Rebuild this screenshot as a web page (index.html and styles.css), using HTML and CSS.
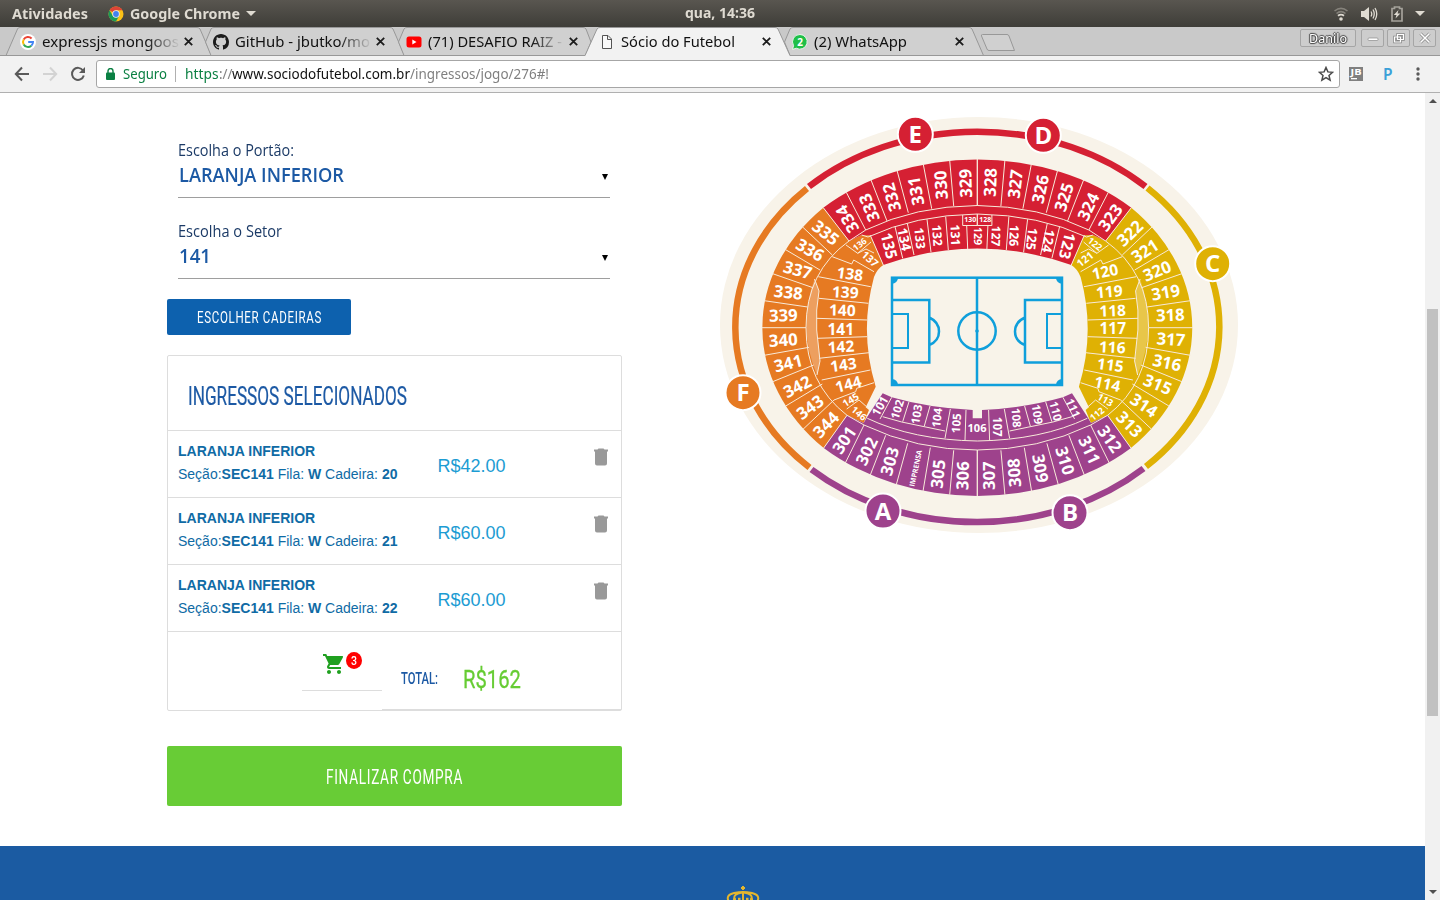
FILE: index.html
```html
<!DOCTYPE html>
<html lang="pt-BR">
<head>
<meta charset="utf-8">
<title>Sócio do Futebol</title>
<link rel="stylesheet" href="styles.css">
</head>
<body>
<div class="desktop">
  <header class="panel">
    <div class="panel-left">
      <span class="fit" data-w="76">Atividades</span>
      <svg class="chrome-logo" width="16" height="16" viewBox="0 0 16 16"><circle cx="8" cy="8" r="7.5" fill="#fbc116"/><path d="M8 8L1.5 4.25A7.5 7.5 0 0 1 14.5 4.25L8 4.3z" fill="#dc4437"/><path d="M1.5 4.25A7.5 7.5 0 0 0 8 15.5L11.2 9.8 8 8 4.8 9.8z" fill="#1b9a59"/><circle cx="8" cy="8" r="3.7" fill="#f1f1f1"/><circle cx="8" cy="8" r="2.9" fill="#4381ee"/></svg>
      <span class="fit" data-w="110">Google Chrome</span>
      <i class="caret"></i>
    </div>
    <span class="clock fit" data-w="70">qua, 14:36</span>
    <div class="panel-right">
      <svg width="14" height="14" viewBox="0 0 14 14" fill="none"><path d="M0.5 4Q7 -1.3 13.500 4M2.500 6.500Q7 2.600 11.500 6.500" stroke="#85827b" stroke-width="1.6"/><path d="M4 8.800Q7 6.500 10 8.800" stroke="#dfdbd2" stroke-width="1.800"/><circle cx="7" cy="12" r="1.800" fill="#dfdbd2"/></svg>
      <svg width="17" height="14" viewBox="0 0 17 14"><path d="M0 4h3l5-4v14l-5-4H0z" fill="#dfdbd2"/><path d="M10 4.500Q11.500 7 10 9.500M12 2.500Q14.500 7 12 11.500M14 1Q17.500 7 14 13" fill="none" stroke="#dfdbd2" stroke-width="1.300"/></svg>
      <svg width="12" height="16" viewBox="0 0 12 16"><path d="M1 2.500h2.500V1h5v1.500H11V15H1z" fill="none" stroke="#a5a29b" stroke-width="1.700"/><path d="M7.500 4L2.800 9h2.700l-1 3.500L9.300 7.500H6.500z" fill="#dfdbd2"/></svg>
      <i class="caret"></i>
    </div>
  </header>

  <nav class="tabstrip">
    <svg class="tab-shapes" width="1440" height="29" viewBox="0 27 1440 29">
      <g fill="#d0d0d0" stroke="#989898">
        <path d="M6 55.500L17.500 29Q18 27.500 20 27.500H197Q199 27.500 200 29L211.500 55.500"/>
        <path d="M205.500 42L211 29Q212 27.500 214 27.500H390Q392 27.500 393 29L404.500 55.500H211z"/>
        <path d="M398.500 42L404 29Q405 27.500 407 27.500H583Q585 27.500 586 29L591 42 585.500 55.500H404z"/>
        <path d="M784.500 42L790 29Q791 27.500 793 27.500H969Q971 27.500 972 29L983.500 55.500H790z"/>
        <path d="M982.500 34.500H1007Q1008.500 34.500 1009 36L1014.500 50.500H989Q987.500 50.500 987 49L981.500 36Q981 34.500 982.500 34.500z"/>
      </g>
      <path d="M0 55.500H1440" stroke="#989898"/>
      <path d="M585 56L597 29Q598 27.500 600 27.500H775Q777 27.500 778 29L790 56z" fill="#f2f2f2"/>
      <path d="M585 55.500L597 29Q598 27.500 600 27.500H775Q777 27.500 778 29L790 55.500" fill="none" stroke="#989898"/>
    </svg>
    <div class="tab">
      <svg width="16" height="16" viewBox="0 0 16 16" fill="none" stroke-width="2"><circle cx="8" cy="8" r="8" fill="#fff"/><path d="M11.600 4.500A5 5 0 0 0 3.700 5.500" stroke="#ea4335"/><path d="M3.700 5.500A5 5 0 0 0 3.700 10.500" stroke="#fbbc05"/><path d="M3.700 10.500A5 5 0 0 0 11.300 11.700" stroke="#34a853"/><path d="M11.300 11.700A5 5 0 0 0 13 8H8.200" stroke="#4285f4"/></svg>
      <span class="tab-title fade"><span class="fit" data-w="137">expressjs mongoos</span></span>
      <svg class="x" width="9" height="9" viewBox="0 0 9 9"><path d="M.8.8l7.400 7.400M8.200.8L.8 8.200"/></svg>
    </div>
    <div class="tab">
      <svg width="16" height="16" viewBox="0 0 16 16"><path fill="#1b1b1b" d="M8 0C3.580 0 0 3.580 0 8c0 3.540 2.290 6.530 5.470 7.590.4.070.550-.170.550-.380 0-.190-.010-.820-.010-1.490-2.010.370-2.530-.490-2.690-.940-.090-.230-.480-.940-.820-1.130-.280-.150-.680-.520-.010-.530.630-.010 1.080.580 1.230.820.720 1.210 1.870.870 2.330.660.070-.520.280-.870.510-1.070-1.780-.200-3.640-.890-3.640-3.950 0-.870.310-1.590.820-2.150-.080-.200-.360-1.020.080-2.120 0 0 .670-.210 2.200.820.640-.180 1.320-.270 2-.270s1.360.090 2 .270c1.530-1.040 2.200-.820 2.200-.820.440 1.100.160 1.920.080 2.120.510.560.820 1.270.820 2.150 0 3.070-1.870 3.750-3.650 3.950.290.250.540.730.540 1.480 0 1.070-.010 1.930-.010 2.200 0 .210.150.460.550.380A8 8 0 0 0 16 8c0-4.420-3.580-8-8-8z"/></svg>
      <span class="tab-title fade"><span class="fit" data-w="135">GitHub - jbutko/mo</span></span>
      <svg class="x" width="9" height="9" viewBox="0 0 9 9"><path d="M.8.8l7.400 7.400M8.200.8L.8 8.200"/></svg>
    </div>
    <div class="tab">
      <svg width="16" height="16" viewBox="0 0 16 16"><rect x=".500" y="2.500" width="15" height="11" rx="2.500" fill="#f00"/><path d="M6.300 5.600v5l4.200-2.500z" fill="#fff"/></svg>
      <span class="tab-title fade"><span class="fit" data-w="134">(71) DESAFIO RAIZ -</span></span>
      <svg class="x" width="9" height="9" viewBox="0 0 9 9"><path d="M.8.8l7.400 7.400M8.200.8L.8 8.200"/></svg>
    </div>
    <div class="tab active">
      <svg width="16" height="16" viewBox="0 0 16 16"><path d="M3.500 1.500h5.500l3.500 3.500v9.500h-9zM8.500 1.500v4h4" fill="#fafafa" stroke="#555"/></svg>
      <span class="tab-title"><span class="fit" data-w="114">Sócio do Futebol</span></span>
      <svg class="x" width="9" height="9" viewBox="0 0 9 9"><path d="M.8.8l7.400 7.400M8.200.8L.8 8.200"/></svg>
    </div>
    <div class="tab">
      <svg width="16" height="16" viewBox="0 0 16 16"><path d="M8 .5a7.300 7.300 0 1 1-3.700 13.700L.6 15.300l1-3.700A7.300 7.300 0 0 1 8 .5z" fill="#1fbf48" stroke="#fff" stroke-width=".8"/><text x="8" y="12" text-anchor="middle" class="wa">2</text></svg>
      <span class="tab-title"><span class="fit" data-w="93">(2) WhatsApp</span></span>
      <svg class="x" width="9" height="9" viewBox="0 0 9 9"><path d="M.8.8l7.400 7.400M8.200.8L.8 8.200"/></svg>
    </div>
    <div class="win-controls">
      <div class="win user"><span class="fit" data-w="38">Danilo</span></div>
      <div class="win"><svg width="12" height="12" viewBox="0 0 12 12"><rect x="1" y="6" width="10" height="2.500" rx="1" fill="#fff" stroke="#8a8a8a" stroke-width=".7"/></svg></div>
      <div class="win"><svg width="12" height="12" viewBox="0 0 12 12" fill="none"><path d="M4.500 2.500h6v5h-6zM1.500 5h6v5h-6z" stroke="#888" stroke-width="2.600"/><path d="M4.500 2.500h6v5h-6zM1.500 5h6v5h-6z" stroke="#fff" stroke-width="1.200"/></svg></div>
      <div class="win"><svg width="12" height="12" viewBox="0 0 12 12"><path d="M1.500 1.500l9 9M10.500 1.500l-9 9" stroke="#888" stroke-width="3"/><path d="M1.500 1.500l9 9M10.500 1.500l-9 9" stroke="#fff" stroke-width="1.500"/></svg></div>
    </div>
  </nav>

  <div class="toolbar">
    <svg class="nav-icons" width="74" height="18" viewBox="14 65 74 18" fill="none" stroke-width="2"><path d="M29 74H16M22 67.500L15.800 74 22 80.500" stroke="#5a5a5a"/><path d="M43 74H56M50 67.500L56.200 74 50 80.500" stroke="#d3d3d3"/><path d="M83 70.500A6 6 0 1 0 83.800 75.500" stroke="#5a5a5a"/><path d="M85 67v6h-6z" fill="#5a5a5a"/></svg>
    <div class="omnibox">
      <svg width="9" height="12" viewBox="0 0 9 12"><rect y="4.500" width="9" height="7.500" rx="1" fill="#0b8043"/><path d="M2 5V3a2.500 2.500 0 0 1 5 0v2" fill="none" stroke="#0b8043" stroke-width="1.400"/></svg>
      <span class="fit secure" data-w="44">Seguro</span>
      <i class="sep"></i>
      <span class="url"><span class="fit scheme" data-w="33.500">https</span><span class="fit dim" data-w="13.500">://</span><span class="fit" data-w="178">www.sociodofutebol.com.br</span><span class="fit dim" data-w="139">/ingressos/jogo/276#!</span></span>
      <svg class="star" width="16" height="16" viewBox="0 0 16 16"><path d="M8 1.500l1.900 4.400 4.700.4-3.600 3.100 1.100 4.700L8 11.600l-4.100 2.500L5 9.400 1.400 6.300l4.700-.4z" fill="none" stroke="#4a4a4a" stroke-width="1.500"/></svg>
    </div>
    <svg class="ext" width="14" height="14" viewBox="0 0 14 14"><rect width="14" height="14" fill="#808080"/><text x="1.500" y="8" textLength="11" lengthAdjust="spacingAndGlyphs" class="jb">JB</text><rect x="2" y="11" width="6" height="1.300" fill="#fff"/></svg>
    <span class="pext">P</span>
    <svg class="menu" width="4" height="14" viewBox="0 0 4 14" fill="#5a5a5a"><circle cx="2" cy="2" r="1.700"/><circle cx="2" cy="7" r="1.700"/><circle cx="2" cy="12" r="1.700"/></svg>
  </div>

  <div class="viewport">
    <div class="page">
      <main class="content">
        <section class="order">
          <div class="field first">
            <label><span class="fit" data-w="116">Escolha o Portão:</span></label>
            <div class="select"><span class="fit" data-w="165">LARANJA INFERIOR</span><i class="down"></i></div>
          </div>
          <div class="field">
            <label><span class="fit" data-w="104">Escolha o Setor</span></label>
            <div class="select"><span class="fit" data-w="32">141</span><i class="down"></i></div>
          </div>
          <button class="choose"><span class="fit" data-w="125">ESCOLHER CADEIRAS</span></button>
          <div class="card">
            <h2><span class="fit" data-w="219">INGRESSOS SELECIONADOS</span></h2>
            <div class="item">
              <div class="seat"><b>LARANJA INFERIOR</b><p>Seção:<b>SEC141</b> Fila: <b>W</b> Cadeira: <b>20</b></p></div>
              <span class="price">R$42.00</span>
              <svg class="trash" width="14" height="18" viewBox="0 0 14 18"><path d="M1 3h12v12.500a2 2 0 0 1-2 2H3a2 2 0 0 1-2-2zM0 1.500h3.500L4.500.5h5l1 1H14V3.500H0z"/></svg>
            </div>
            <div class="item">
              <div class="seat"><b>LARANJA INFERIOR</b><p>Seção:<b>SEC141</b> Fila: <b>W</b> Cadeira: <b>21</b></p></div>
              <span class="price">R$60.00</span>
              <svg class="trash" width="14" height="18" viewBox="0 0 14 18"><path d="M1 3h12v12.500a2 2 0 0 1-2 2H3a2 2 0 0 1-2-2zM0 1.500h3.500L4.500.5h5l1 1H14V3.500H0z"/></svg>
            </div>
            <div class="item">
              <div class="seat"><b>LARANJA INFERIOR</b><p>Seção:<b>SEC141</b> Fila: <b>W</b> Cadeira: <b>22</b></p></div>
              <span class="price">R$60.00</span>
              <svg class="trash" width="14" height="18" viewBox="0 0 14 18"><path d="M1 3h12v12.500a2 2 0 0 1-2 2H3a2 2 0 0 1-2-2zM0 1.500h3.500L4.500.5h5l1 1H14V3.500H0z"/></svg>
            </div>
            <div class="total">
              <div class="cart">
                <svg width="24" height="24" viewBox="0 0 24 24"><path fill="#1fa01f" d="M7 18c-1.100 0-1.990.9-1.990 2S5.900 22 7 22s2-.9 2-2-.9-2-2-2zM1 2v2h2l3.600 7.590-1.350 2.450c-.160.280-.250.610-.250.960 0 1.100.9 2 2 2h12v-2H7.420c-.140 0-.250-.110-.250-.250l.030-.120.900-1.630h7.450c.750 0 1.410-.410 1.750-1.030l3.580-6.490A1 1 0 0 0 20 4H5.210l-.940-2H1zm16 16c-1.100 0-1.990.9-1.990 2s.890 2 1.990 2 2-.9 2-2-.9-2-2-2z"/></svg>
                <span class="badge"><span class="fit" data-w="6">3</span></span>
              </div>
              <div class="sum">
                <span class="fit sum-label" data-w="37">TOTAL:</span>
                <span class="fit sum-value" data-w="58">R$162</span>
              </div>
            </div>
          </div>
          <button class="finish"><span class="fit" data-w="137">FINALIZAR COMPRA</span></button>
        </section>

        <svg class="stadium" width="530" height="430" viewBox="715 110 530 430">
          <ellipse cx="979" cy="325" rx="259" ry="208" fill="#f8f3e9"/>
          <g fill="none" stroke-width="6.500">
            <path d="M809 186.500A242 195 0 0 1 1145.500 186.500" stroke="#d52033"/>
            <path d="M1147.500 188A242 195 0 0 1 1146 466.500" stroke="#dfb104"/>
            <path d="M1143.500 468.500A242 195 0 0 1 811.500 469.500" stroke="#9e428c"/>
            <path d="M809.500 467.500A242 195 0 0 1 807 188.500" stroke="#e67a22"/>
          </g>

          <!-- west stand -->
          <path fill="#e67a22" d="M823.300 207.700A215 172 0 0 0 823.700 448L847 415.300 863.700 423 869 410 865.700 407.300 875.700 386.700Q859 332 874 277 877 269 883.300 265L873.700 243 870.300 235.300 861.700 235 849 241z"/>
          <!-- east stand -->
          <path fill="#dfb104" transform="matrix(-1 0 0 1 1954.600 0)" d="M823.300 207.700A215 172 0 0 0 823.700 448L847 415.300 863.700 423 869 410 865.700 407.300 875.700 386.700Q859 332 874 277 877 269 883.300 265L873.700 243 870.300 235.300 861.700 235 849 241z"/>
          <path id="gap" fill="#fff" fill-opacity=".28" d="M814.500 279Q797 328 817 375L820 361 816.700 330V310L819 291z"/>
          <use href="#gap" transform="matrix(-1 0 0 1 1954.600 0)"/>
          <!-- north stand -->
          <path fill="#d52033" d="M823.300 207.700A220 168.500 0 0 1 1131.300 207.700L1105.600 241 1093 235 1084.300 235.300 1081 243 1071.300 265Q977.300 232 883.300 265L873.700 243 870.300 235.300 861.700 235 849 241z"/>
          <!-- south stand -->
          <path fill="#9e428c" d="M823.700 448A220 168.500 0 0 0 1131 448L1107.600 415.300 1091 423 1087.300 416.700 1072 393.300 1062.900 397.300Q1025 408 982 410V418.300H972.700V410Q929 408 891.700 397.300L882.700 393.300 867.300 416.700 863.700 423 847 415.300z"/>

          <g id="lines" fill="none" stroke="#f8ead9" stroke-width="1">
            <path d="M823.300 207.700L849 241M846.300 192.300L865.700 230M871 180L887 221M897 170.300L908.300 212.700M923.300 164.300L931.700 208.700M949.700 160.300L953.700 206M977.300 159V205.500"/>
            <path d="M802.300 226.700L832.300 255M785 249.300L820 270M772.700 273.700L813 287.700M764.300 300.700L807.700 307M761.700 327.700H806M764.300 355.300L809 347.300M772.700 381.700L813.700 365M785.700 406L822.300 384M803 429.300L834 400M823.700 448L847 415.300"/>
            <path d="M845.300 463L864 425M870.300 475L885.700 435.300M896.300 484.700L907.700 443.300M923 491.300L930.300 447.700M949.700 494.700L953.700 450.300M977.300 496V450"/>
            <path d="M977.300 205.500Q915 206 865.700 230L849 241Q806 272 806 327.700T847 415.300L864 425Q916 450 977.300 450"/>
            <path d="M861.700 235L868 237Q915 215 977.300 214M870.300 235.300L873.700 243 883.300 265"/>
            <path d="M895 226.700L902.700 258.300M907.300 223.300L914 255M927 219.300L931 252.300M945.700 216.700L948.300 250M966.700 225.500L967.700 249M962.700 215V225.500H977.300V214"/>
            <path d="M846 245L857.700 253.300 871 242M857.700 253.300L866 249 874 253M832.300 256.700L851.700 264 853.700 260 874 271.700M818.300 276.700L870.700 286.700M819 298.300L868.300 303.300M816.700 318.300L867 320M817.300 338.300L867 336.700M819 358.300L869 352.700M821.700 380L870.300 370M834 400L855.700 391.700 856.700 388.300 874 382.700M846.700 409L859 400 868 408"/>
            <path d="M814.500 279L819 291 816.700 310V330L820 361 817 375"/>
            <path d="M891.700 397.300L880 419M909 401.700L902.700 421.700M930 406L924.300 426M950.300 409L945 438.300M966 410L965 440M882.700 416.700L901.700 422 945 431M867.300 418.300Q913 440 977.300 441"/>
          </g>
          <use href="#lines" transform="matrix(-1 0 0 1 1954.600 0)"/>

          <g fill="none" stroke="#0f9fdb" stroke-width="2.500">
            <rect x="892" y="277.700" width="170" height="107.300"/><path d="M977 277.700V385M892 300H929.300V362.500H892M1062 300H1025V362.500H1062M929.300 317.500Q939 322 939 331.500T929.300 345M1025 317.500Q1015 322 1015 331.500T1025 345"/><path d="M892 314H908V348H892M1062 314H1047V348H1062" stroke-width="2"/><circle cx="977" cy="331" r="18.700"/>
          </g>
          <circle cx="977" cy="331" r="1.800" fill="#0f9fdb"/>
          <path fill="#0f9fdb" d="M892 277.700h6a6 6 0 0 1-6 6zM1062 277.700h-6a6 6 0 0 0 6 6zM892 385h6a6 6 0 0 0-6-6zM1062 385h-6a6 6 0 0 1 6-6z"/>

          <g class="upper" id="upper"></g>
          <g class="lower" id="lower"></g>
          <g class="gates" id="gates"></g>
        </svg>
      </main>
      <footer class="footer">
        <svg width="34" height="16" viewBox="0 0 34 16" fill="none" stroke="#e3b62f" stroke-width="2"><path d="M17 0v4M15 2h4M3 16Q-1 9 8 7 13 6 17 6T26 7Q35 9 31 16M9 14Q6 8 16 6.500M25 14Q28 8 18 6.500M17 6v7"/><path d="M7 13.500h3M12 13h2.500M16 13.500h2M20 13h2.500M24 13.500h3" stroke-width="2.500"/></svg>
      </footer>
    </div>
    <div class="scrollbar"><i class="arr up"></i><i class="thumb"></i><i class="arr dn"></i></div>
  </div>
</div>
<script src="app.js"></script>
</body>
</html>
```

FILE: styles.css
```css
* { box-sizing: border-box; }
body { margin: 0; width: 1440px; height: 900px; overflow: hidden; font-family: "Noto Sans", "Open Sans", sans-serif; background: #fff; }
svg { display: block; flex: none; }
i { display: block; flex: none; }
.desktop { display: flex; flex-direction: column; height: 900px; }
.fit { display: inline-block; white-space: pre; flex: none; }

/* desktop panel */
.panel { display: grid; grid-template-columns: 685px 1fr auto; align-items: center; height: 27px; background: linear-gradient(#595650, #3e3d38); color: #dfdbd2; font-size: 14px; font-weight: 700; line-height: 26px; }
.panel-left { display: flex; align-items: center; padding-left: 12px; }
.clock { justify-self: start; font-size: 13.5px; line-height: 25px; }
.chrome-logo { margin: 0 6px 0 20px; }
.caret { width: 0; height: 0; border: 5px solid transparent; border-top: 5px solid #dfdbd2; border-bottom: 0; }
.panel-left .caret { margin-left: 6px; }
.panel-right { display: flex; align-items: center; padding-right: 15px; }
.panel-right svg { margin-right: 13px; }
.panel-right svg:nth-child(3) { margin-right: 12px; }

/* tabs */
.tabstrip { position: relative; display: flex; height: 29px; padding-left: 20px; background: #c9c9c9; flex: none; }
.tab-shapes { position: absolute; left: 0; top: 0; }
.tab { position: relative; display: flex; align-items: center; width: 193px; height: 29px; font-size: 14.5px; line-height: 29px; color: #111; flex: none; }
.tab-title { width: 137px; margin-left: 6px; height: 29px; overflow: hidden; }
.tab > svg:first-child { margin-top: 1px; }
.tab:nth-child(n+3) .tab-title { margin-left: 6px; width: 136px; }
.fade { -webkit-mask-image: linear-gradient(90deg, #000 76%, transparent 101%); mask-image: linear-gradient(90deg, #000 76%, transparent 101%); }
.tabstrip .x { margin-left: 5px; margin-top: 0; fill: none; stroke: #1c1c1c; stroke-width: 1.8; }
.wa { font: 700 10px "Noto Sans", sans-serif; fill: #fff; }
.win-controls { position: relative; display: flex; margin-left: auto; padding: 2px 4px 0 0; gap: 3px; }
.win { display: flex; align-items: center; justify-content: center; width: 23px; height: 18px; border: 1px solid #a5a5a5; border-radius: 2px; background: #cdcdcd; }
.user { width: 56px; margin-right: 2px; color: #fff; font-size: 13px; line-height: 16px; text-shadow: 1px 0 1px #444, -1px 0 1px #444, 0 1px 1px #444, 0 -1px 1px #444; }

/* toolbar */
.toolbar { display: flex; align-items: center; height: 37px; background: #f2f2f2; border-bottom: 1px solid #b0b0b0; padding-left: 14px; flex: none; }
.omnibox { display: flex; align-items: center; width: 1244px; height: 28px; margin: 0 9px 0 8px; padding-left: 9px; background: #fff; border: 1px solid #a6a6a6; border-radius: 3px; font-size: 14px; line-height: 26px; color: #111; }
.secure { margin-left: 8px; color: #0b8043; }
.sep { width: 1px; height: 16px; margin: 0 9px 0 8px; background: #b0b0b0; }
.url { display: flex; }
.scheme { color: #0b8043; }
.dim { color: #808080; }
.star { margin: 0 5px 0 auto; }
.jb { font: 700 8px "Open Sans", sans-serif; fill: #fff; }
.pext { width: 10px; margin: 0 0 0 20px; color: #3ba0d8; font: 600 15.5px/20px "Noto Sans", sans-serif; }
.menu { margin-left: 23px; }

/* page */
.viewport { display: flex; flex: 1; min-height: 0; }
.page { display: flex; flex-direction: column; width: 1425px; overflow: hidden; }
.content { display: flex; align-items: flex-start; height: 753px; padding-left: 167px; flex: none; }
.order { width: 455px; }
.stadium { margin: 17px 0 0 93px; }
.field { margin-left: 11px; width: 432px; height: 81px; padding-top: 23px; border-bottom: 1px solid #9e9e9e; }
.field.first { height: 105px; padding-top: 47px; }
.field label { display: block; height: 21px; color: #1b3a66; font-size: 15.5px; line-height: 20px; font-family: "Open Sans", sans-serif; }
.select { display: flex; align-items: center; justify-content: space-between; height: 28px; padding: 0 2px 0 1px; color: #1c59a4; font: 600 20px/28px "Open Sans", sans-serif; }
.down { width: 0; height: 0; border: 3px solid transparent; border-top: 6px solid #000; border-bottom: 0; margin-top: 4px; }
button { display: flex; justify-content: center; align-items: center; border: 0; border-radius: 2px; color: #fff; padding: 0; font-family: Roboto, sans-serif; }
.choose { width: 184px; height: 36px; margin-top: 20px; padding-top: 1px; background: #0d61ae; font-size: 17px; line-height: 35px; letter-spacing: 1px; }
.card { margin-top: 20px; height: 356px; border: 1px solid #ddd; border-radius: 2px; font-family: "Liberation Sans", Arial, sans-serif; }
.card h2 { margin: 0; height: 75px; padding: 4px 0 0 20px; border-bottom: 1px solid #ddd; color: #1c59a4; font: 400 25.5px/72px Roboto, sans-serif; -webkit-text-stroke: .2px #1c59a4; }
.item { display: flex; height: 67px; padding: 9px 13px 0 10px; border-bottom: 1px solid #ddd; color: #0f6ba5; font-size: 14px; line-height: 23px; }
.seat { width: 259.5px; flex: none; }
.seat b { font-weight: 700; }
.seat p { margin: 0; }
.price { flex: 1; padding-top: 15px; color: #1c9cd3; font-size: 18px; }
.trash { margin-top: 7.5px; fill: #999; }
.total { display: flex; align-items: flex-start; height: 79px; padding-left: 134px; }
.cart { display: flex; width: 80px; height: 59px; padding: 20px 0 0 20px; border-bottom: 1px solid #ddd; }
.badge { display: flex; align-items: center; justify-content: center; width: 16px; height: 17px; border-radius: 50%; background: #f00; color: #fff; font: 500 13px/18px Roboto, sans-serif; }
.sum { display: flex; flex: 1; height: 78px; padding-left: 19px; border-bottom: 1px solid #ddd; font-family: Roboto, sans-serif; }
.sum-label { padding-top: 26px; color: #1c59a4; font-size: 17px; font-weight: 500; line-height: 40px; }
.sum-value { margin-left: 24.5px; padding-top: 27px; color: #66cc33; font-size: 26.5px; line-height: 40px; -webkit-text-stroke: .3px #66cc33; }
.finish { width: 455px; height: 60px; margin-top: 35px; padding-top: 2px; background: #68cc36; font-size: 20px; line-height: 58px; letter-spacing: 1px; }
.footer { display: flex; justify-content: center; height: 54px; padding: 40px 0 0 61px; background: #1b5ba2; flex: none; }

/* scrollbar */
.scrollbar { display: flex; flex-direction: column; align-items: center; width: 15px; background: #f1f1f1; }
.arr { width: 0; height: 0; border: 4px solid transparent; }
.up { border-top: 0; border-bottom-color: #505050; margin-top: 6px; }
.dn { border-bottom: 0; border-top-color: #505050; margin: auto 0 6px; }
.thumb { width: 11px; height: 407px; margin-top: 206px; background: #c1c1c1; }

/* stadium labels */
.stadium text { fill: #fff; text-anchor: middle; font-family: "Open Sans", "Noto Sans", sans-serif; font-weight: 700; }
.gates text { font-size: 24px; }
```

FILE: app.js
```js
// Squeeze or stretch each label to its nominal width
document.querySelectorAll('.fit').forEach(function (el) {
  var w = parseFloat(el.dataset.w);
  var inner = document.createElement('span');
  inner.style.display = 'inline-block';
  inner.style.transformOrigin = '0 50%';
  inner.textContent = el.textContent;
  el.textContent = '';
  el.appendChild(inner);
  var natural = inner.getBoundingClientRect().width;
  inner.style.transform = 'scaleX(' + w / natural + ')';
  el.style.width = w + 'px';
});

// [label, x, y, rotation, font size]
var upper = [
  [335,825.7,232.7,38],[336,810,250,30],[337,797.7,270,15],[338,788.3,292.3,6],[339,783.3,315.3,-2],
  [340,783.3,340,-4],[341,788.3,363.3,-14],[342,797.3,386.7,-27],[343,810,407.3,-36],[344,826,424.7,-46],
  [301,844.3,440,-56],[302,866.7,451.3,-64],[303,889.7,461.3,-74],['IMPRENSA',915.7,468.3,-78,7.2],[305,938,474,-84],
  [306,962.7,475.7,-88],[307,989,475.7,-90],[308,1014.3,472.7,-94],[309,1040.3,468.3,80],[310,1065,460.7,73],
  [311,1089.3,450,65],[312,1109.7,439,55],[313,1129.3,424.3,45],[314,1144,405.3,34],[315,1157.7,384.3,22],
  [316,1167,362.7,12],[317,1171,339.3,4],[318,1170.3,315,-2],[319,1165.7,292.3,-10],[320,1157,271,-22],
  [321,1145,251,-33],[322,1130,233.3,-44],[323,1110.3,217.7,-54],[324,1088.3,206.7,-64],[325,1064,197.3,-72],
  [326,1040.3,189.3,-78],[327,1015.3,184,-83],[328,990.3,182.3,-88],[329,965.7,183.3,-92],[330,941,185,-94],
  [331,916,191,-100],[332,891.7,197.3,-106],[333,869.3,207.7,-112],[334,847.3,219,-120]
];
var lower = [
  [138,850,274,8],[139,845.3,292.3,3],[140,842.3,310.3,1],[141,840.7,329.3,0],[142,841,346.7,-3],[143,843.3,365,-8],
  [144,848.3,384.3,-15],[145,850.7,400,-32,10],[146,859,413.3,40,9.5],[137,870,259,42,10.5],[136,859.7,244.3,-38,8.5],
  [135,889,245.7,76,15.5],[134,904.3,239.3,78,13.5],[133,919.7,238.3,84,12.5],[132,937.3,235.3,86,12.5],[131,955.3,235,88,12.5],
  [130,970.3,219.7,0,7],[128,985.3,219.7,0,7],[129,977.5,236,90,10.5],[127,996,236,92,12],[126,1014,235.7,92,12.5],
  [125,1031.7,239,97,13],[124,1048.3,241,100,13.5],[123,1067.3,245.7,104,15.5],[122,1095,244,38,9],[121,1085,259.3,-38,10.5],
  [120,1105,271.7,-12],[119,1109.3,291.7,-5],[118,1112.7,310.7,-2],[117,1112.7,328.3,0],[116,1112.3,347.3,3],
  [115,1110.3,365,8],[114,1107.3,384,12],[113,1105.3,400,30,9.5],[112,1097,414,-38,9],
  [101,880,406,-60,12],[102,897.3,409.3,-72,11.5],[103,916.7,414.3,-80,11.5],[104,937,417.7,-83,11.5],[105,956.3,423.3,-86,11.5],
  [106,977,428,0,11],[107,997.3,426.7,90,11.5],[108,1016.3,417.7,86,11.5],[109,1037.3,414.3,82,11.5],[110,1055.7,411,76,11.5],[111,1073,408,66,11.5]
];
var gates = [['E',915.3,134.3,'#d52033'],['D',1043.3,135.3,'#d52033'],['C',1212.7,263.7,'#dfb104'],['F',743,392.7,'#e67a22'],['A',883,511,'#9e428c'],['B',1070,512.7,'#9e428c']];

function label(d, size) {
  var s = d[4] || size;
  return '<text transform="translate(' + d[1] + ' ' + d[2] + ') rotate(' + (d[3] || 0) + ')" y="' + (s * 0.357).toFixed(2) + '" style="font-size:' + s + 'px">' + d[0] + '</text>';
}
document.getElementById('upper').innerHTML = upper.map(function (d) { return label(d, 16.8); }).join('');
document.getElementById('lower').innerHTML = lower.map(function (d) { return label(d, 15.5); }).join('');
document.getElementById('gates').innerHTML = gates.map(function (g) {
  return '<circle cx="' + g[1] + '" cy="' + g[2] + '" r="17.5" fill="' + g[3] + '" stroke="#fff" stroke-width="2"/>' +
    '<text x="' + g[1] + '" y="' + (g[2] + 8.5) + '">' + g[0] + '</text>';
}).join('');
```
